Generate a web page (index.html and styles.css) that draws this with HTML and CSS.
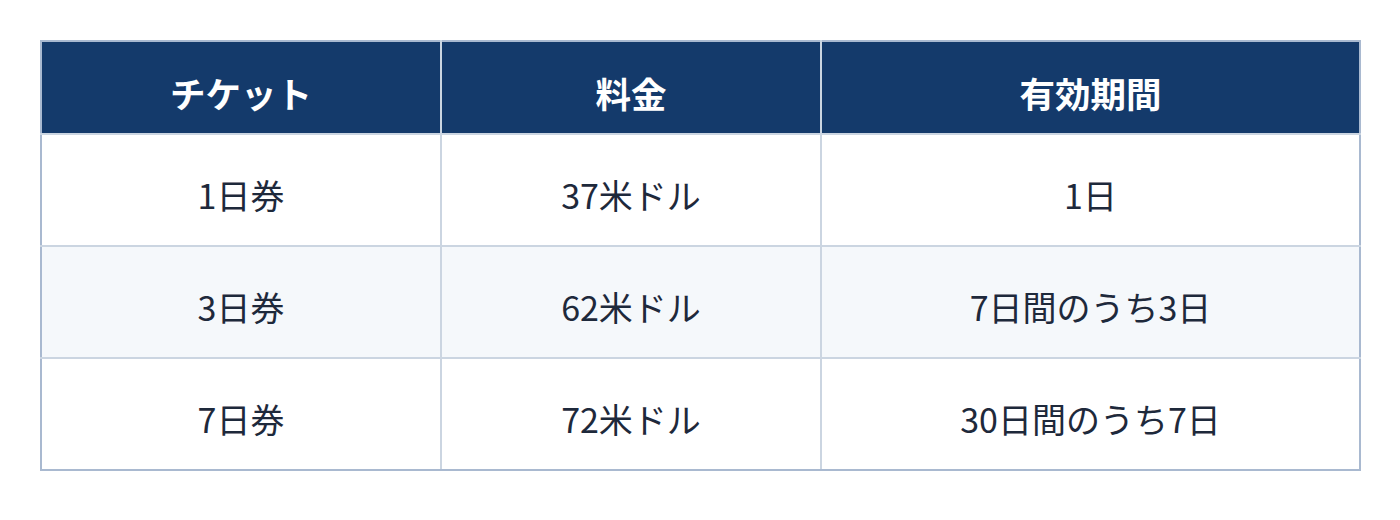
FILE: index.html
```html
<!DOCTYPE html>
<html lang="ja">
<head>
<meta charset="utf-8">
<link rel="stylesheet" href="styles.css">
</head>
<body>
<table class="tickets">
  <colgroup>
    <col class="c1"><col class="c2"><col class="c3">
  </colgroup>
  <thead>
    <tr><th>チケット</th><th>料金</th><th>有効期間</th></tr>
  </thead>
  <tbody>
    <tr><td>1日券</td><td>37米ドル</td><td>1日</td></tr>
    <tr class="alt"><td>3日券</td><td>62米ドル</td><td>7日間のうち3日</td></tr>
    <tr><td>7日券</td><td>72米ドル</td><td>30日間のうち7日</td></tr>
  </tbody>
</table>
</body>
</html>
```
FILE: styles.css
```css
html, body {
  margin: 0;
  background: #ffffff;
}
body {
  padding: 40px 39px 40px 40px;
  font-family: "Noto Sans CJK JP", "Noto Sans", sans-serif;
}
.tickets {
  width: 100%;
  border-collapse: collapse;
  border: 2px solid #a9b9d0;
  table-layout: fixed;
}
.c1 { width: 400px; }
.c2 { width: 380px; }
.tickets th {
  background: #143a6b;
  color: #ffffff;
  font-weight: 700;
  font-size: 35.5px;
  height: 81px;
  padding: 10px 0 0;
  border: 2px solid #cbd5e1;
  border-top-color: #a9b9d0;
  text-align: center;
}
.tickets td {
  color: #1e293b;
  font-size: 34px;
  height: 101px;
  padding: 9px 0 0;
  text-align: center;
  border: 2px solid #cbd5e1;
}
.tickets th:first-child,
.tickets td:first-child {
  border-left-color: #a9b9d0;
}
.tickets th:last-child,
.tickets td:last-child {
  border-right-color: #a9b9d0;
}
.tickets tbody tr:last-child td {
  border-bottom-color: #a9b9d0;
}
.tickets tr.alt td {
  background: #f5f8fb;
}
```
